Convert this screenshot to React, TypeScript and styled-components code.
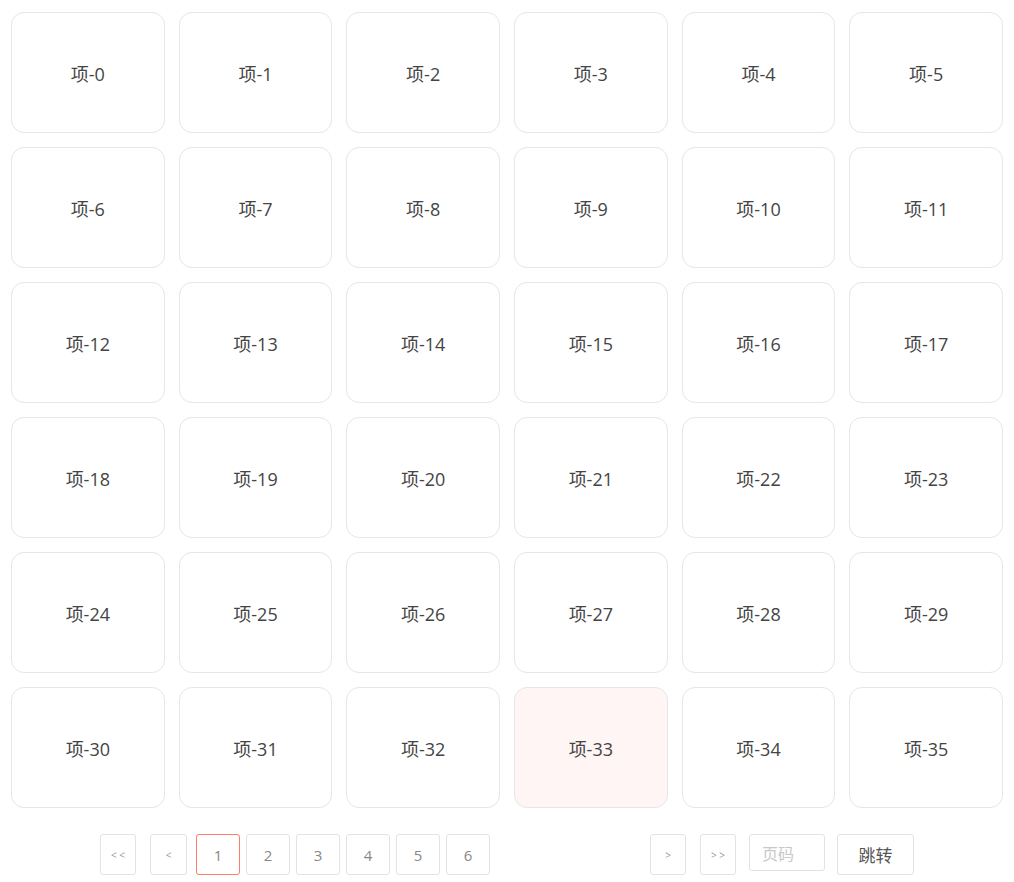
import styled, { createGlobalStyle } from 'styled-components';

const items = Array.from({ length: 36 }, (_, i) => `项-${i}`);
const pages = [1, 2, 3, 4, 5, 6];

function App() {
  const current = 1;
  const selected = 33;
  return (
    <>
      <GlobalStyle />
      <Page>
        <Grid>
          {items.map((label, i) => (
            <Card key={label} $active={i === selected}>
              {label}
            </Card>
          ))}
        </Grid>
        <Pager>
          <NavButton>&lt; &lt;</NavButton>
          <NavButton $gap={14} $wide>&lt;</NavButton>
          <PageList>
            {pages.map((p) => (
              <PageButton key={p} $active={p === current}>
                {p}
              </PageButton>
            ))}
          </PageList>
          <NavButton $gap={14}>&gt;</NavButton>
          <NavButton $gap={14}>&gt; &gt;</NavButton>
          <JumpInput placeholder="页码" />
          <JumpButton>跳转</JumpButton>
        </Pager>
      </Page>
    </>
  );
}

const GlobalStyle = createGlobalStyle`
  body {
    margin: 0;
    background: #fff;
    font-family: 'Open Sans', 'Noto Sans CJK SC', sans-serif;
  }
`;

const Page = styled.div`
  padding: 12px 11px 0;
`;

const Grid = styled.div`
  display: grid;
  grid-template-columns: repeat(6, 1fr);
  gap: 14px;
`;

const Card = styled.div<{ $active?: boolean }>`
  height: 121px;
  box-sizing: border-box;
  display: flex;
  align-items: center;
  justify-content: center;
  border: 1px solid #e6e6e6;
  border-radius: 13px;
  background: ${({ $active }) => ($active ? '#fff5f4' : '#fff')};
  color: #444;
  font-size: 18px;
`;

const Pager = styled.div`
  display: flex;
  align-items: flex-start;
  justify-content: center;
  margin-top: 26px;
`;

const NavButton = styled.button<{ $gap?: number; $wide?: boolean }>`
  width: ${({ $wide }) => ($wide ? 37 : 36)}px;
  height: 41px;
  margin-left: ${({ $gap }) => $gap ?? 0}px;
  padding: 0;
  border: 1px solid #e3e3e3;
  border-radius: 3px;
  background: #fff;
  color: #999;
  font-family: 'Open Sans', sans-serif;
  font-size: 10px;
`;

const PageList = styled.div`
  display: flex;
  gap: 6px;
  width: 440px;
  margin-left: 9px;
`;

const PageButton = styled.button<{ $active?: boolean }>`
  width: 44px;
  height: 41px;
  padding: 0;
  border: 1px solid ${({ $active }) => ($active ? '#ff7b6b' : '#e3e3e3')};
  border-radius: 3px;
  background: #fff;
  color: #888;
  font-family: 'Open Sans', sans-serif;
  font-size: 15px;
`;

const JumpInput = styled.input`
  width: 76px;
  height: 37px;
  margin-left: 13px;
  box-sizing: border-box;
  padding: 0 12px;
  border: 1px solid #e3e3e3;
  border-radius: 3px;
  font-family: 'Noto Sans CJK SC', sans-serif;
  font-size: 16px;
  outline: none;
  &::placeholder {
    color: #c8c8c8;
  }
`;

const JumpButton = styled.button`
  width: 77px;
  height: 41px;
  margin-left: 12px;
  border: 1px solid #e3e3e3;
  border-radius: 3px;
  background: #fff;
  color: #555;
  font-family: 'Noto Sans CJK SC', sans-serif;
  font-size: 17px;
`;

export default App;
